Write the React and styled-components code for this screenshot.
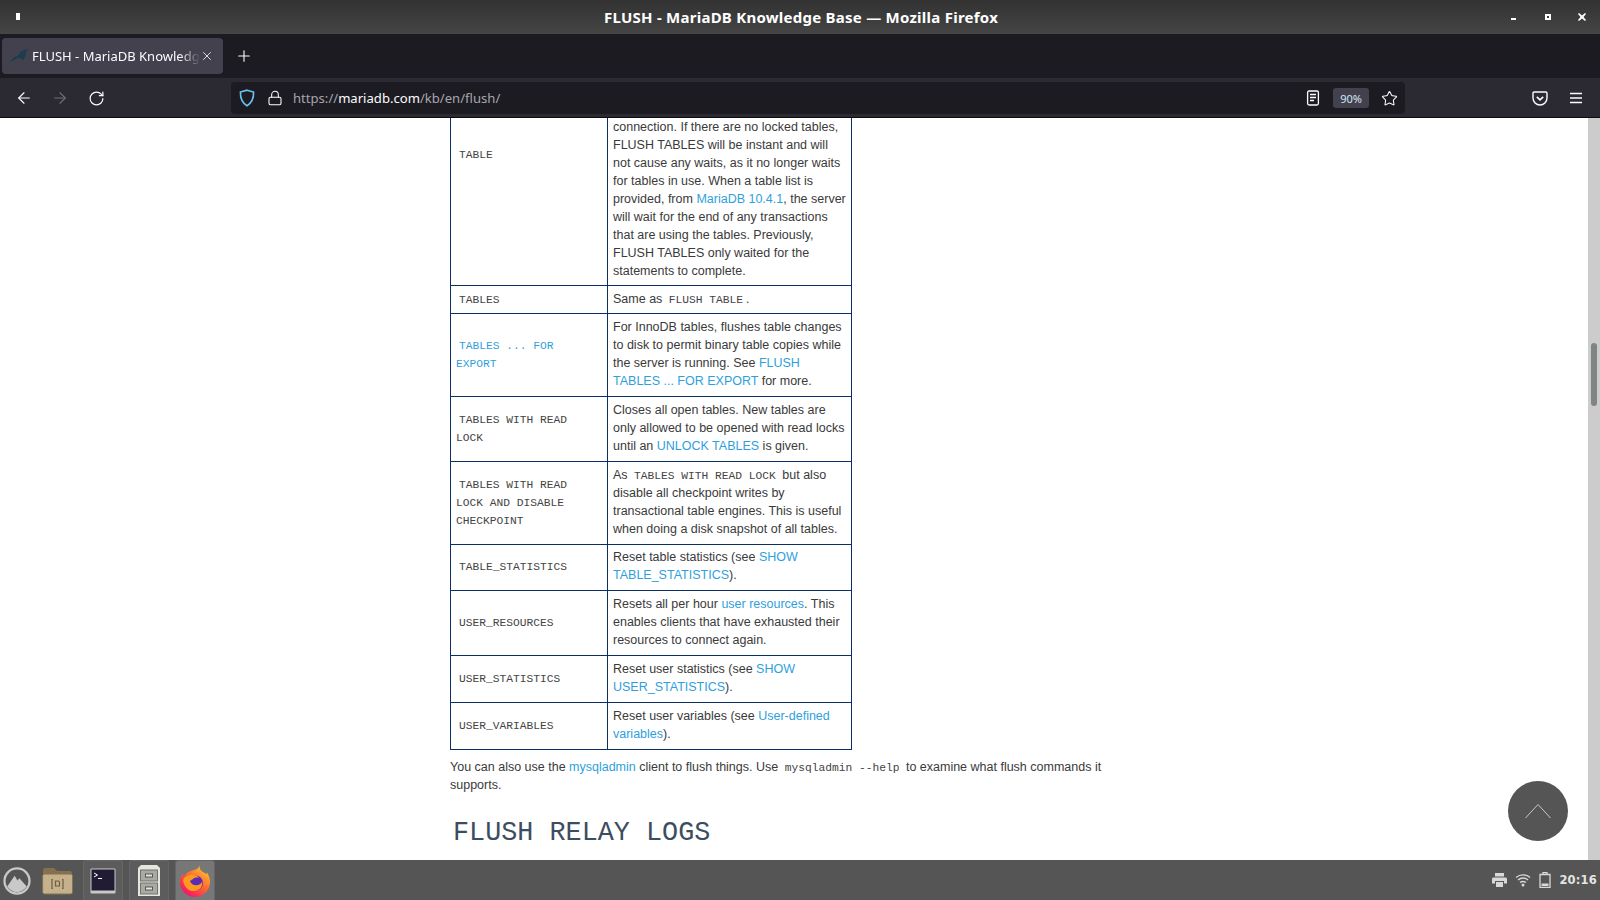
import React from "react";
import styled, { createGlobalStyle } from "styled-components";
import { ArrowLeft, ArrowRight, Lock, Plus, RotateCw, Star, X } from "lucide-react";

const GlobalStyle = createGlobalStyle`
  html, body {
    margin: 0;
    padding: 0;
    height: 100%;
    overflow: hidden;
    background: #fff;
  }
`;

const Screen = styled.div`
  display: flex;
  flex-direction: column;
  width: 1600px;
  height: 900px;
  position: relative;
  overflow: hidden;
`;

const TitleBar = styled.header`
  flex: 0 0 34px;
  box-sizing: border-box;
  display: flex;
  align-items: center;
  padding: 0 14px 1px 16px;
  background: linear-gradient(#323232, #454545);
  color: #fff;
  font: 700 15px "Noto Sans", sans-serif;
`;

const TitleSide = styled.div`
  flex: 1;
  display: flex;
  align-items: center;
  justify-content: ${(p) => (p.$end ? "flex-end" : "flex-start")};
  gap: 26px;
`;

const WindowMenu = styled.span`
  width: 4px;
  height: 7px;
  background: #fff;
`;

const WindowTitle = styled.span`
  letter-spacing: 0.25px;
`;

const WindowButton = styled.svg`
  width: 8px;
  height: 8px;
  display: block;
`;

const TabStrip = styled.div`
  flex: 0 0 44px;
  display: flex;
  align-items: center;
  padding-left: 2px;
  background: #1c1b22;
`;

const Tab = styled.div`
  width: 221px;
  height: 36px;
  box-sizing: border-box;
  display: flex;
  align-items: center;
  padding: 0 9px 0 8px;
  border-radius: 4px;
  background: #42414d;
  color: #fbfbfe;
  font: 400 13px "Noto Sans", sans-serif;
`;

const TabLabel = styled.span`
  flex: 1;
  margin-left: 4px;
  white-space: nowrap;
  overflow: hidden;
  -webkit-mask-image: linear-gradient(to right, #000 88%, transparent);
  mask-image: linear-gradient(to right, #000 88%, transparent);
`;

const NewTab = styled.div`
  display: flex;
  margin-left: 12px;
  color: #fbfbfe;
`;

const NavBar = styled.nav`
  flex: 0 0 40px;
  box-sizing: border-box;
  display: flex;
  align-items: center;
  padding: 1px 0 0 15px;
  background: #2b2a33;
  border-bottom: 1px solid #0c0c0d;
  color: #fbfbfe;
`;

const NavButton = styled.div`
  width: 18px;
  height: 18px;
  margin-right: 18px;
  display: flex;
  align-items: center;
  justify-content: center;
  color: ${(p) => (p.$off ? "#6f6e75" : "#fbfbfe")};
`;

const UrlBar = styled.div`
  width: 1174px;
  height: 32px;
  margin-left: 108px;
  display: flex;
  align-items: center;
  padding: 0 7px 0 8px;
  box-sizing: border-box;
  border-radius: 4px;
  background: #1c1b22;
  font: 400 13.1px "Noto Sans", sans-serif;
`;

const UrlIcon = styled.div`
  display: flex;
  margin-right: ${(p) => p.$gap || 12}px;
`;

const UrlText = styled.div`
  flex: 1;
  color: #a6a6ab;
  span {
    color: #fbfbfe;
  }
`;

const ZoomBadge = styled.div`
  width: 36px;
  height: 20px;
  margin: 0 12px 0 13px;
  display: flex;
  align-items: center;
  justify-content: center;
  border-radius: 3px;
  background: #42414d;
  color: #d5e6f7;
  font: 400 11px "Noto Sans", sans-serif;
`;

const ToolIcons = styled.div`
  display: flex;
  align-items: center;
  gap: 21px;
  margin-left: 127px;
`;

const Main = styled.main`
  flex: 1;
  min-height: 0;
  display: flex;
  overflow: hidden;
  background: #fff;
`;

const Page = styled.div`
  flex: 1;
  padding-left: 450px;
  font: 400 12.5px/17.95px "Liberation Sans", Arial, sans-serif;
  color: #3a3a3a;
`;

const Column = styled.div`
  width: 660px;
`;

const Table = styled.table`
  width: 402px;
  margin-top: -93px;
  border-collapse: collapse;
  table-layout: fixed;
`;

const NameCol = styled.col`
  width: 157px;
`;

const Cell = styled.td`
  padding: ${(p) => (p.$clipped ? "93px 4px 4px 5px" : "4.94px 4px 4.94px 5px")};
  border: 1px solid #0a2f66;
  vertical-align: middle;
`;

const NameCell = styled(Cell)`
  padding: 4.94px 9px 4.94px 5px;
`;

const Code = styled.code`
  padding: 0 3px;
  font: 400 11.25px/1 "Liberation Mono", monospace;
  color: ${(p) => (p.$link ? "#2f9fdc" : "#444")};
`;

const Link = styled.a`
  color: #2f9fdc;
  text-decoration: none;
`;

const Note = styled.p`
  margin: 9.5px 0 0;
`;

const Heading = styled.h2`
  margin: 21px 0 0;
  padding-left: 3px;
  font: 400 26.8px/34px "Liberation Mono", monospace;
  color: #3d4d61;
`;

const Scrollbar = styled.div`
  flex: 0 0 12px;
  box-sizing: border-box;
  padding: 225px 3px 0;
  background: #ccc;
`;

const Thumb = styled.div`
  height: 63px;
  border-radius: 3px;
  background: #7f8585;
`;

const TopButton = styled.div`
  position: absolute;
  left: 1508px;
  top: 781px;
  width: 60px;
  height: 60px;
  display: flex;
  align-items: center;
  justify-content: center;
  border-radius: 50%;
  background: #555;
`;

const Taskbar = styled.footer`
  flex: 0 0 40px;
  display: flex;
  align-items: center;
  padding: 0 3px 0 2px;
  background: #555;
`;

const Launcher = styled.div`
  width: ${(p) => p.$w || 40}px;
  height: 40px;
  margin-right: ${(p) => p.$gap || 0}px;
  box-sizing: border-box;
  display: flex;
  align-items: center;
  justify-content: center;
  background: ${(p) => (p.$active ? "#777" : p.$open ? "#5c5c5c" : "transparent")};
  border: 1px solid ${(p) => (p.$open ? "#666" : "transparent")};
  border-bottom: 0;
  border-radius: 3px 3px 0 0;
`;

const Tray = styled.div`
  margin-left: auto;
  display: flex;
  align-items: center;
  gap: 8px;
  color: #ddd;
`;

const Clock = styled.span`
  font: 700 11.5px "DejaVu Sans", sans-serif;
  letter-spacing: 0.2px;
  color: #e4e4e4;
`;

const Seal = () => (
  <svg width="18" height="14" viewBox="0 0 18 14">
    <path fill="#1c3d50" d="M0 13c2-3 4-5 7-6 2-1 3-4 5-5 2-1 4-2 6-2-1 1-2 2-2 3 0 3-1 6-3 8l-1 1c0-2-1-3-2-3-3 0-6 2-10 4z" />
  </svg>
);

const Shield = () => (
  <svg width="16" height="18" viewBox="0 0 16 18" fill="none">
    <path stroke="#6cc3f5" strokeWidth="1.6" d="M8 1.2 14.6 3c.2 6-1.5 10.6-6.6 13.8C2.900 13.600 1.200 9 1.400 3z" />
  </svg>
);

const Reader = () => (
  <svg width="14" height="16" viewBox="0 0 14 16" fill="none" stroke="#fbfbfe" strokeWidth="1.3">
    <rect x="1.600" y="1" width="10.800" height="14" rx="1.500" />
    <path d="M4 4.500h6M4 7.500h6M4 10.500h4" />
  </svg>
);

const Pocket = () => (
  <svg width="16" height="15" viewBox="0 0 16 15" fill="none" stroke="#fbfbfe" strokeWidth="1.4">
    <path d="M2.200 1h11.600c.7 0 1.200.5 1.200 1.200V7c0 4-3.200 7-7 7s-7-3-7-7V2.200C1 1.500 1.500 1 2.200 1z" />
    <path d="m4.800 5.800 3.200 3 3.200-3" strokeWidth="1.600" />
  </svg>
);

const Burger = () => (
  <svg width="14" height="12" viewBox="0 0 14 12" stroke="#fbfbfe" strokeWidth="1.400">
    <path d="M1 1.500h12M1 6h12M1 10.500h12" />
  </svg>
);

const Peak = () => (
  <svg width="30" height="30" viewBox="0 0 30 30">
    <circle cx="15" cy="15" r="13.400" fill="none" stroke="#c9c9c9" strokeWidth="2.400" />
    <path fill="#c9c9c9" d="M4.500 21 12.500 9.500 15.500 14.500 17.500 12 25.500 21c-2.500 3.500-6.300 6-10.500 6s-8-2.500-10.500-6z" />
  </svg>
);

const Folder = () => (
  <svg width="31" height="28" viewBox="0 0 31 28">
    <path fill="#86714f" d="M1 3c0-1 1-2 2-2h9l3 3h13c1 0 2 1 2 2v4H1z" />
    <path fill="#c5b18c" stroke="#83704f" d="M.6 9c0-1 1-2 2-2h26c1 0 2 1 2 2v16c0 1-1 2-2 2h-26c-1 0-2-1-2-2z" />
    <path fill="none" stroke="#6f5e42" strokeWidth="1.200" d="M11 12.500H10v9h1M20 12.500h1v9h-1M13.500 14h3l1 1v4h-4z" />
  </svg>
);

const Terminal = () => (
  <svg width="26" height="26" viewBox="0 0 26 26">
    <rect x=".5" y=".5" width="25" height="25" rx="1" fill="#c9c9c9" />
    <rect x="1.500" y="1.500" width="23" height="21" fill="#211b33" />
    <path d="m4 5 3.500 2L4 9" fill="none" stroke="#fff" />
    <path d="M8 10.500h4" stroke="#fff" />
  </svg>
);

const Cabinet = () => (
  <svg width="22" height="32" viewBox="0 0 22 32">
    <path fill="#e6e6e0" d="M3 0h16l3 3v28H0V3z" />
    <rect x="2.500" y="5" width="17" height="11" fill="#a9aba3" stroke="#70726b" />
    <rect x="2.500" y="18" width="17" height="11" fill="#a9aba3" stroke="#70726b" />
    <rect x="7.500" y="9" width="7" height="3" fill="#e6e6e0" stroke="#555" />
    <rect x="7.500" y="22" width="7" height="3" fill="#e6e6e0" stroke="#555" />
  </svg>
);

const Firefox = () => (
  <svg width="30" height="32" viewBox="0 0 30 32">
    <defs>
      <linearGradient id="foxBody" x1="0.800" y1="0.100" x2="0.200" y2="0.900">
        <stop offset="0" stopColor="#ffbd2e" />
        <stop offset="0.450" stopColor="#ff6b2e" />
        <stop offset="1" stopColor="#f5156c" />
      </linearGradient>
    </defs>
    <path fill="url(#foxBody)" d="M20 0c-1 3 0 5 3 7 2 1 3 2 4 2l-.3-2C29 10 30 14 30 17c0 8-6.700 15-15 15S0 25 0 17c0-3 1-6 3-9 0 2 0 3 1 4 1-3 3-5 7-6 3-1 8-2 9-6z" />
    <circle cx="15.500" cy="18" r="7.500" fill="#5b2bb5" />
    <path fill="#ff9a1f" d="M3 15c2-4 6-6 10-5 3 0 5 1 6 3-3-1-5 0-6 1l-3 2c1 3 4 5 8 4 3-.7 4-2.500 4-4 1 4-1 8-5 9.500-6 2-12-1-14-10z" />
  </svg>
);

const Printer = () => (
  <svg width="15" height="14" viewBox="0 0 15 14" fill="#d8d8d8">
    <rect x="3" y="0" width="9" height="3.500" />
    <path d="M1.500 4.500h12c.8 0 1.500.7 1.500 1.500v4.500h-3V8H3v2.500H0V6c0-.8.700-1.500 1.500-1.500z" />
    <rect x="4" y="9" width="7" height="5" />
  </svg>
);

const WifiIcon = () => (
  <svg width="16" height="14" viewBox="0 0 16 14" fill="none" stroke="#d8d8d8" strokeWidth="1.400">
    <path d="M1 4.500C5 1 11 1 15 4.500M3 7c3-2.500 7-2.500 10 0M5 9.500c2-1.300 4-1.300 6 0" />
    <circle cx="8" cy="12" r="1.500" fill="#d8d8d8" stroke="none" />
  </svg>
);

const Battery = () => (
  <svg width="12" height="16" viewBox="0 0 12 16" fill="none">
    <path stroke="#d8d8d8" strokeWidth="1.300" d="M1 2.500h10v13H1zM4 2.500V.7h4v1.800" />
    <rect x="2.500" y="11.500" width="7" height="2.500" fill="#d8d8d8" />
  </svg>
);

const WindowDot = ({ kind }) => (
  <WindowButton viewBox="0 0 8 8" fill="#fff">
    {kind === "min" && <rect x="1" y="5" width="5" height="2" />}
    {kind === "max" && <path fillRule="evenodd" d="M1 1h6v6H1zM3 3v2h2V3z" />}
    {kind === "close" && <path d="M1 0l3 2.500L7 0l1 1-2.500 3L8 7 7 8 4 5.500 1 8 0 7l2.500-3L0 1z" />}
  </WindowButton>
);

const rows = [
  {
    name: "TABLE",
    clipped: true,
    text: (
      <>
        connection. If there are no locked tables, FLUSH TABLES will be instant and will not cause any waits, as it no longer waits for tables in use. When a table list is provided, from <Link>MariaDB 10.4.1</Link>, the server will wait for the end of any transactions that are using the tables. Previously, FLUSH TABLES only waited for the statements to complete.
      </>
    ),
  },
  {
    name: "TABLES",
    text: (
      <>
        Same as <Code>FLUSH TABLE</Code>.
      </>
    ),
  },
  {
    name: "TABLES ... FOR EXPORT",
    link: true,
    text: (
      <>
        For InnoDB tables, flushes table changes to disk to permit binary table copies while the server is running. See <Link>FLUSH TABLES ... FOR EXPORT</Link> for more.
      </>
    ),
  },
  {
    name: "TABLES WITH READ LOCK",
    text: (
      <>
        Closes all open tables. New tables are only allowed to be opened with read locks until an <Link>UNLOCK TABLES</Link> is given.
      </>
    ),
  },
  {
    name: "TABLES WITH READ LOCK AND DISABLE CHECKPOINT",
    text: (
      <>
        As <Code>TABLES WITH READ LOCK</Code> but also disable all checkpoint writes by transactional table engines. This is useful when doing a disk snapshot of all tables.
      </>
    ),
  },
  {
    name: "TABLE_STATISTICS",
    text: (
      <>
        Reset table statistics (see <Link>SHOW TABLE_STATISTICS</Link>).
      </>
    ),
  },
  {
    name: "USER_RESOURCES",
    text: (
      <>
        Resets all per hour <Link>user resources</Link>. This enables clients that have exhausted their resources to connect again.
      </>
    ),
  },
  {
    name: "USER_STATISTICS",
    text: (
      <>
        Reset user statistics (see <Link>SHOW USER_STATISTICS</Link>).
      </>
    ),
  },
  {
    name: "USER_VARIABLES",
    text: (
      <>
        Reset user variables (see <Link>User-defined variables</Link>).
      </>
    ),
  },
];

export default function App() {
  return (
    <Screen>
      <GlobalStyle />
      <TitleBar>
        <TitleSide>
          <WindowMenu />
        </TitleSide>
        <WindowTitle>FLUSH - MariaDB Knowledge Base — Mozilla Firefox</WindowTitle>
        <TitleSide $end>
          <WindowDot kind="min" />
          <WindowDot kind="max" />
          <WindowDot kind="close" />
        </TitleSide>
      </TitleBar>

      <TabStrip>
        <Tab>
          <Seal />
          <TabLabel>FLUSH - MariaDB Knowledge Base</TabLabel>
          <X size={14} strokeWidth={1.4} />
        </Tab>
        <NewTab>
          <Plus size={18} strokeWidth={1.5} />
        </NewTab>
      </TabStrip>

      <NavBar>
        <NavButton>
          <ArrowLeft size={18} strokeWidth={1.5} />
        </NavButton>
        <NavButton $off>
          <ArrowRight size={18} strokeWidth={1.5} />
        </NavButton>
        <NavButton>
          <RotateCw size={17} strokeWidth={1.7} />
        </NavButton>
        <UrlBar>
          <UrlIcon $gap={12}>
            <Shield />
          </UrlIcon>
          <UrlIcon $gap={10}>
            <Lock size={16} strokeWidth={1.6} />
          </UrlIcon>
          <UrlText>
            https://<span>mariadb.com</span>/kb/en/flush/
          </UrlText>
          <Reader />
          <ZoomBadge>90%</ZoomBadge>
          <Star size={17} strokeWidth={1.5} />
        </UrlBar>
        <ToolIcons>
          <Pocket />
          <Burger />
        </ToolIcons>
      </NavBar>

      <Main>
        <Page>
          <Column>
            <Table>
              <colgroup>
                <NameCol />
                <col />
              </colgroup>
              <tbody>
                {rows.map((row) => (
                  <tr key={row.name}>
                    <NameCell>
                      {row.link ? (
                        <Link>
                          <Code $link>{row.name}</Code>
                        </Link>
                      ) : (
                        <Code>{row.name}</Code>
                      )}
                    </NameCell>
                    <Cell $clipped={row.clipped}>{row.text}</Cell>
                  </tr>
                ))}
              </tbody>
            </Table>
            <Note>
              You can also use the <Link>mysqladmin</Link> client to flush things. Use <Code>mysqladmin --help</Code> to examine what flush commands it supports.
            </Note>
            <Heading>FLUSH RELAY LOGS</Heading>
          </Column>
        </Page>
        <Scrollbar>
          <Thumb />
        </Scrollbar>
      </Main>

      <TopButton>
        <svg width="28" height="16" viewBox="0 0 28 16" fill="none" stroke="#c8c8c8" strokeWidth="1">
          <path d="M1.500 15 14 1.500 26.500 15" />
        </svg>
      </TopButton>

      <Taskbar>
        <Launcher $w={30} $gap={8}>
          <Peak />
        </Launcher>
        <Launcher $w={34} $gap={9}>
          <Folder />
        </Launcher>
        <Launcher $open $gap={6}>
          <Terminal />
        </Launcher>
        <Launcher $open $gap={6}>
          <Cabinet />
        </Launcher>
        <Launcher $active $open>
          <Firefox />
        </Launcher>
        <Tray>
          <Printer />
          <WifiIcon />
          <Battery />
          <Clock>20:16</Clock>
        </Tray>
      </Taskbar>
    </Screen>
  );
}
